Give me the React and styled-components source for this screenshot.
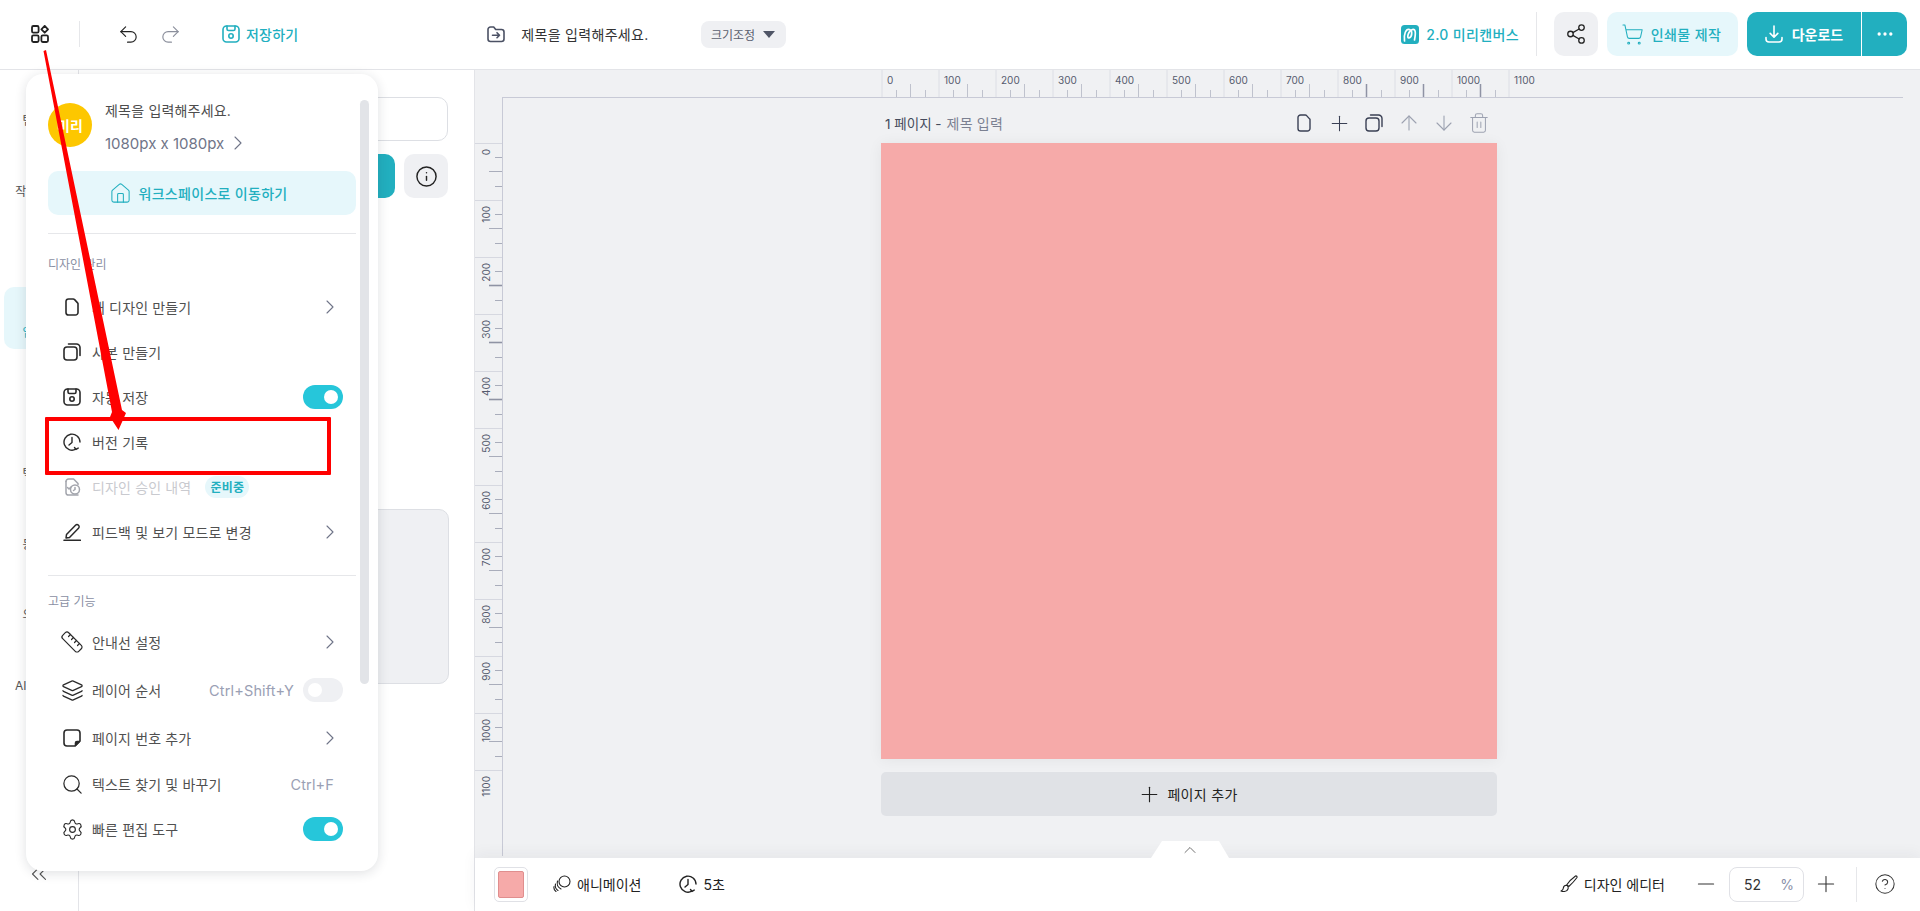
import React from "react";
import styled, { createGlobalStyle } from "styled-components";
import {
  Undo2, Redo2, Share2, Info, Trash2, CircleHelp, House, Ruler, Layers, Search, Settings,
  ChevronRight, ChevronsLeft, ChevronUp, Plus, Minus, ArrowUp, ArrowDown, ShoppingCart, Ellipsis,
} from "lucide-react";

const TEAL = "#22afbf";
const TINT = "#e6f7fb";
const GREY = "#eff0f3";
const FONT = `Inter, "Noto Sans CJK KR", sans-serif`;

const Global = createGlobalStyle`
  html, body { margin: 0; padding: 0; background: #fff; }
  * { box-sizing: border-box; }
  body { font-family: ${FONT}; color: #333; }
`;

const Page = styled.div`
  position: relative; width: 1920px; height: 911px; overflow: hidden;
  display: grid; grid-template-rows: 70px 1fr; background: #fff;
`;

/* a fixed box in which an icon that has inner padding may overflow, centred */
const IconBox = styled.span`
  width: ${p => p.$w || 18}px; height: 18px; display: flex; align-items: center; justify-content: center; flex: none;
  color: ${p => p.$color || "inherit"};
  & > svg { flex: none; }
`;

/* ---------- header ---------- */
const Header = styled.header`
  display: flex; align-items: center; height: 70px; border-bottom: 1px solid #e3e4e8;
  padding: 0 13px 1px 31px;
`;
const VLine = styled.span`
  width: 1px; height: ${p => p.$h}px; background: #e6e7ea; flex: none;
`;
const Group = styled.div`
  display: flex; align-items: center; gap: ${p => p.$gap || 0}px; flex: none;
  margin-left: ${p => p.$ml || 0}px; margin-right: ${p => p.$mr || 0}px;
  color: ${p => p.$color || "inherit"};
`;
const SaveText = styled.span`
  font-size: 14px; font-weight: 500; color: ${TEAL}; letter-spacing: .2px;
`;
const DocTitle = styled.span`
  font-size: 14px; color: #333; letter-spacing: .3px;
`;
const ResizePill = styled.div`
  display: flex; align-items: center; justify-content: center; gap: 8px;
  width: 85px; height: 27px; background: ${GREY}; border-radius: 8px;
  font-size: 12px; color: #5a5f70; margin-left: 52px;
`;
const Caret = styled.span`
  width: 0; height: 0; border-left: 6px solid transparent; border-right: 6px solid transparent;
  border-top: 7px solid #4f5566;
`;
const Spacer = styled.div`flex: 1;`;
const MiriText = styled.span`
  font-size: 14px; font-weight: 500; color: ${TEAL}; letter-spacing: .35px;
`;
const SquareBtn = styled.div`
  width: 44px; height: 44px; border-radius: 10px; background: ${GREY}; color: #222;
  display: flex; align-items: center; justify-content: center; flex: none;
`;
const PrintBtn = styled.div`
  display: flex; align-items: center; justify-content: center; gap: 9px; width: 131px; height: 44px;
  margin-left: 9px; border-radius: 10px; background: ${TINT}; color: ${TEAL};
  font-size: 14px; font-weight: 500; letter-spacing: .4px;
`;
const DownloadBtn = styled.div`
  display: flex; align-items: stretch; width: 160px; height: 44px; margin-left: 9px;
  border-radius: 10px; background: ${TEAL}; color: #fff; overflow: hidden;
`;
const DownloadMain = styled.div`
  flex: 1; display: flex; align-items: center; justify-content: center; gap: 9px;
  font-size: 14px; font-weight: 700; border-right: 1px solid #fff;
`;
const DownloadMore = styled.div`
  width: 45px; display: flex; align-items: center; justify-content: center;
`;

/* ---------- body ---------- */
const Body = styled.div`
  display: grid; grid-template-columns: 79px 396px 1fr; min-height: 0;
`;
const Sidebar = styled.nav`
  display: flex; flex-direction: column; align-items: center; padding: 5px 0 24px; gap: 8.6px;
  border-right: 1px solid #e3e4e8; height: 841px;
`;
const NavItem = styled.div`
  width: 70px; height: 62px; flex: none; border-radius: 10px; display: flex; align-items: flex-end; justify-content: center;
  padding-bottom: 9px; font-size: 12px; white-space: nowrap;
  background: ${p => p.$active ? TINT : "transparent"}; color: ${p => p.$active ? TEAL : "#555"};
`;
const Collapse = styled.div`
  margin-top: auto; color: #555; display: flex;
`;
const Panel = styled.section`
  border-right: 1px solid #e3e4e8; padding: 27px 26px 0 27px;
  display: flex; flex-direction: column;
`;
const PanelInput = styled.div`
  height: 44px; width: 342px; border: 1px solid #dddfe4; border-radius: 10px;
`;
const PanelActions = styled.div`
  display: flex; gap: 9px; margin-top: 13px;
`;
const PanelGo = styled.div`
  flex: 1; height: 44px; background: ${TEAL}; border-radius: 10px;
`;
const PanelBox = styled.div`
  margin-top: 311px; height: 175px; width: 343px; background: ${GREY}; border: 1px solid #dddfe4; border-radius: 10px;
`;

/* ---------- editor ---------- */
const Editor = styled.main`
  display: flex; flex-direction: column; min-width: 0; background: #f0f1f3; height: 841px;
`;
const HRulerSvg = styled.svg`
  display: block; flex: none; width: 100%; height: 28px;
`;
const Work = styled.div`
  flex: 1; display: flex; min-height: 0;
`;
const VRulerSvg = styled.svg`
  display: block; flex: none; width: 28px; height: 760px;
`;
const Stage = styled.div`
  flex: 1; display: flex; justify-content: center; padding: 15px 45px 0 0;
`;
const PageColumn = styled.div`
  width: 616px; display: flex; flex-direction: column;
`;
const PageHead = styled.div`
  height: 20px; display: flex; align-items: center; padding: 0 9px 0 4px; margin-bottom: 10px;
`;
const PageNo = styled.span`
  font-size: 13.500px; color: #444b5c; white-space: pre;
`;
const PageName = styled.span`
  font-size: 14px; color: #7b8091; margin-left: 5px; letter-spacing: .2px;
`;
const PageTools = styled.div`
  margin-left: auto; display: flex; gap: 17px;
`;
const Artboard = styled.div`
  width: 616px; height: 616px; background: #f6aaa9; box-shadow: 0 1px 14px rgba(0,0,0,.06);
`;
const AddPage = styled.div`
  margin-top: 13px; height: 44px; border-radius: 5px; background: #e0e2e6;
  display: flex; align-items: center; justify-content: center; gap: 9px; font-size: 14px; color: #222; letter-spacing: .3px;
`;
const BottomBar = styled.footer`
  position: relative; flex: none; height: 53px; background: #fff; display: flex; align-items: center;
  padding: 0 26px 1px 18px; box-shadow: 0 -4px 14px rgba(40,45,60,.05);
`;
const ExpandTab = styled.div`
  position: absolute; left: 676px; top: -17px; width: 78px; height: 17px; background: #fff;
  clip-path: polygon(0 100%, 11px 0, 68px 0, 100% 100%);
  display: flex; align-items: center; justify-content: center; color: #555;
`;
const Swatch = styled.div`
  width: 34px; height: 35px; border: 1px solid #e0e1e6; border-radius: 5px; padding: 3px;
  display: flex; margin-left: 1px;
`;
const SwatchFill = styled.div`
  flex: 1; background: #f6aaa9; border: 1px solid #e08e8e; border-radius: 2px;
`;
const BarItem = styled.div`
  display: flex; align-items: center; gap: 6px; font-size: 14px; color: #222; margin-left: ${p => p.$ml}px; flex: none;
`;
const ZoomInput = styled.div`
  width: 75px; height: 35px; margin: 0 13px 0 14px; border: 1px solid #e0e1e6; border-radius: 8px;
  display: flex; align-items: center; justify-content: space-between; padding: 0 9px 0 14px; font-size: 14px; color: #333;
`;
const Percent = styled.span`color: #8a90a8;`;

/* ---------- menu ---------- */
const Menu = styled.aside`
  position: absolute; left: 26px; top: 74px; width: 352px; height: 797px; background: #fff;
  border-radius: 17px; box-shadow: 0 2px 12px rgba(30,35,50,.14); padding: 29px 22px 0;
`;
const ScrollThumb = styled.div`
  position: absolute; left: 334px; top: 26px; width: 9px; height: 584px; background: #e2e4e8; border-radius: 5px;
`;
const MenuHead = styled.div`
  display: flex; gap: 13px; height: 44px;
`;
const Avatar = styled.div`
  width: 44px; height: 44px; border-radius: 50%; background: #fdc700; color: #fff;
  display: flex; align-items: center; justify-content: center; font-size: 14px; font-weight: 600; flex: none;
`;
const HeadText = styled.div`
  display: flex; flex-direction: column; justify-content: space-between; margin-top: -3px; height: 55px;
`;
const HeadTitle = styled.div`font-size: 14px; color: #4d4d4d; letter-spacing: .2px;`;
const HeadSize = styled.div`
  display: flex; align-items: center; gap: 2px; font-size: 15px; color: #6f7488;
`;
const WorkspaceBtn = styled.div`
  margin-top: 24px; height: 44px; border-radius: 10px; background: ${TINT}; color: ${TEAL};
  display: flex; align-items: center; justify-content: center; gap: 9px; font-size: 14px; font-weight: 500; padding-right: 5px; letter-spacing: .3px;
`;
const Divider = styled.div`
  height: 1px; background: #e6e7ea; margin-top: ${p => p.$mt}px;
`;
const SectionLabel = styled.div`
  height: 18px; line-height: 18px; font-size: 12px; color: #8a8fa3; margin-top: ${p => p.$mt}px; margin-bottom: ${p => p.$mb}px;
`;
const Row = styled.div`
  display: flex; align-items: center; height: ${p => p.$h || 45}px; padding: 0 22px 0 15px; font-size: 14px; letter-spacing: .15px;
  color: ${p => p.$off ? "#c9cacf" : "#505050"};
`;
const RowIcon = styled(IconBox)`
  margin-right: 11px; color: ${p => p.$off ? "#a3a5ad" : "#2a2a2a"};
`;
const RowEnd = styled.span`
  margin-left: auto; display: flex; align-items: center; gap: 9px; color: #6f7488;
`;
const Shortcut = styled.span`color: #9aa0b4; font-size: 14.500px;`;
const Toggle = styled.span`
  display: flex; align-items: center; justify-content: ${p => p.$on ? "flex-end" : "flex-start"};
  width: 40px; height: 24px; border-radius: 12px; padding: 0 5px; margin-right: -9px;
  background: ${p => p.$on ? "#26c6da" : GREY};
`;
const Knob = styled.span`
  width: 14px; height: 14px; border-radius: 50%; background: #fff;
`;
const Badge = styled.span`
  margin-left: 14px; height: 22px; width: 44px; border-radius: 11px; background: ${TINT}; color: ${TEAL};
  font-size: 12px; font-weight: 600; display: flex; align-items: center; justify-content: center;
`;
const RowChevron = styled.span`
  display: flex; margin-right: -8px;
`;

/* ---------- annotation ---------- */
const Highlight = styled.div`
  position: absolute; left: 45px; top: 417px; width: 286px; height: 58px; border: 4px solid #f00; border-radius: 1px;
`;
const ArrowLayer = styled.svg`
  position: absolute; left: 0; top: 0; width: 1920px; height: 911px; pointer-events: none;
`;

/* ---------- drawings ---------- */
const Svg = ({ size = 18, sw = 1.6, children, color }) => (
  <svg width={size} height={size} viewBox="0 0 18 18" fill="none" stroke={color || "currentColor"} strokeWidth={sw}
    strokeLinecap="round" strokeLinejoin="round">{children}</svg>
);
const GridIcon = () => (
  <Svg sw={1.8} color="#222">
    <rect x="1" y="1" width="6.6" height="6.6" rx="1.4" />
    <rect x="1" y="10.4" width="6.6" height="6.6" rx="1.4" />
    <rect x="10.4" y="10.4" width="6.6" height="6.6" rx="1.4" />
    <path d="M13.7.9 17 4.3l-3.3 3.4-3.3-3.4z" />
  </Svg>
);
const SaveIcon = ({ color }) => (
  <Svg color={color} sw={1.6}>
    <rect x="1" y="1" width="16" height="16" rx="3.5" />
    <path d="M5 1v3a1.5 1.5 0 0 0 1.5 1.5h5A1.5 1.5 0 0 0 13 4V1" />
    <circle cx="9" cy="11" r="2.2" />
  </Svg>
);
const FolderIcon = () => (
  <Svg color="#4b5164">
    <path d="M1 4.5A2.5 2.5 0 0 1 3.5 2h3.2l2 2.5h5.8A2.5 2.5 0 0 1 17 7v7a2.5 2.5 0 0 1-2.5 2.5h-11A2.5 2.5 0 0 1 1 14z" />
    <path d="M5.5 10.2h7M10 7.7l2.5 2.5-2.5 2.5" />
  </Svg>
);
const Logo = () => (
  <svg width="18" height="19" viewBox="0 0 18 19">
    <rect width="18" height="19" rx="3.5" fill={TEAL} />
    <path d="M3.500 16C2.500 9 5 3.500 8.500 4.500c3.500 1 2.500 8-.5 8.500-2.500.4-1 -7 3.500 -8.500 3-.8 3.500 3 2 10.500" fill="none" stroke="#fff" strokeWidth="1.700" strokeLinecap="round" />
  </svg>
);
const DownloadIcon = () => (
  <Svg>
    <path d="M9 1v11M5.2 8.4 9 12.200l3.800-3.800M1 12.500v1.500a3 3 0 0 0 3 3h10a3 3 0 0 0 3-3v-1.500" />
  </Svg>
);
const DocIcon = ({ sw = 1.6 }) => (
  <Svg sw={sw}>
    <path d="M3 3.600A2.600 2.600 0 0 1 5.600 1h4.600c.5 0 1 .2 1.400.6l3.200 3.500c.3.3.2.7.2 1.200v8.100a2.600 2.600 0 0 1-2.600 2.600H5.600A2.600 2.600 0 0 1 3 14.400z" />
  </Svg>
);
const CopyIcon = ({ sw = 1.6 }) => (
  <Svg sw={sw}>
    <rect x="1" y="4" width="13" height="13" rx="3" />
    <path d="M5.500 1h8A3.500 3.500 0 0 1 17 4.500V12.500" />
  </Svg>
);
const ClockArrow = () => (
  <Svg sw={1.4}>
    <path d="M12.800 16.200A8 8 0 1 1 17 9" />
    <path d="M9 4.500v5l-3 2.500" />
    <path d="M11.500 14.500l1.500 1.900 2.200-1.300" />
  </Svg>
);
const ApprovalIcon = () => (
  <Svg sw={1.5}>
    <path d="M3 3.600A2.600 2.600 0 0 1 5.600 1h5l4.400 4.500v1" />
    <path d="M3 3.600v10.800A2.600 2.600 0 0 0 5.600 17h9.400" />
    <circle cx="12" cy="11.500" r="4.500" />
    <path d="M4.500 9.500l1.500 1.500 2-2" />
    <path d="M12 9.500v2l-1.500 1" />
  </Svg>
);
const PenIcon = () => (
  <Svg sw={1.5}>
    <path d="M3.500 11.500 12.500 2.300a2.100 2.100 0 0 1 3 3L6.500 14.500 3 15z" />
    <path d="M1 17.300h16.500" />
  </Svg>
);
const StickyIcon = () => (
  <Svg sw={1.6}>
    <path d="M4 1h10a3 3 0 0 1 3 3v8l-5 5H4a3 3 0 0 1-3-3V4a3 3 0 0 1 3-3z" />
    <path d="M12.500 16.500v-2.500a1.500 1.500 0 0 1 1.500-1.500h2.500z" fill="currentColor" />
  </Svg>
);
const AnimationIcon = () => (
  <Svg sw={1.1}>
    <circle cx="11.500" cy="6.500" r="5.500" />
    <path d="M4.500 6a7 7 0 0 0 3.500 8M2.500 9a6 6 0 0 0 2.500 6.500" />
    <path d="M1 11.500a5 5 0 0 0 2 5" />
  </Svg>
);
const BrushIcon = () => (
  <Svg sw={1.1}>
    <path d="M15.500 1 C12 3.500 9 6.500 6.800 9.800l2 1.700C11.500 9 14.500 6 17 2.500c.4-.9-.6-1.900-1.500-1.500z" />
    <path d="M6.300 10.200c-1.900.1-2.900 1.400-3 3.100-.1 1.300-1 2.200-2.300 2.700 2.700 1 6 .5 7-2 .6-1.600-.1-3.500-1.700-3.800z" />
  </Svg>
);

/* ---------- rulers ---------- */
const LABELS = [0, 100, 200, 300, 400, 500, 600, 700, 800, 900, 1000, 1100];
const STEP = 57;
const HOT_H = [800, 900, 1000];
const HOT_V = [200, 300, 400];

const HRuler = () => {
  const ox = 882 - 475;
  return (
    <HRulerSvg viewBox="0 0 1445 28">
      <line x1="27" y1="27.500" x2="1428" y2="27.500" stroke="#c8cad6" />
      {LABELS.map((n, i) => {
        const x = ox + i * STEP;
        const hot = HOT_H.includes(n);
        return (
          <g key={n}>
            <line x1={x} y1="0" x2={x} y2="27" stroke="#dcdee5" />
            <text x={x + 5} y="14" fontSize="10" fill="#555b6e" fontFamily="Inter, sans-serif">{n}</text>
            {n < 1100 && (
              <>
                <line x1={x + 14.500} y1="20" x2={x + 14.500} y2="27" stroke="#bfc2cd" />
                <line x1={x + 28.500} y1="14" x2={x + 28.500} y2="27" stroke={hot ? "#8f93a4" : "#bfc2cd"} strokeWidth={hot ? 1.500 : 1} />
                <line x1={x + 43.500} y1="20" x2={x + 43.500} y2="27" stroke="#bfc2cd" />
              </>
            )}
          </g>
        );
      })}
    </HRulerSvg>
  );
};

const VRuler = () => {
  const oy = 143 - 98;
  return (
    <VRulerSvg viewBox="0 0 28 760">
      <line x1="27.500" y1="0" x2="27.500" y2="758" stroke="#c8cad6" />
      {LABELS.map((n, i) => {
        const y = oy + i * STEP;
        const hot = HOT_V.includes(n);
        return (
          <g key={n}>
            <line x1="0" y1={y + .5} x2="27" y2={y + .5} stroke="#d6d8e0" />
            <text transform={`translate(14.500 ${y + 6}) rotate(-90)`} textAnchor="end" fontSize="10" fill="#555b6e" fontFamily="Inter, sans-serif">{n}</text>
            {n < 1100 && (
              <>
                <line x1="20" y1={y + 14.500} x2="27" y2={y + 14.500} stroke="#a9adbb" />
                <line x1="14" y1={y + 28.500} x2="27" y2={y + 28.500} stroke={hot ? "#8f93a4" : "#a9adbb"} strokeWidth={hot ? 1.600 : 1} />
                <line x1="20" y1={y + 43.500} x2="27" y2={y + 43.500} stroke="#a9adbb" />
              </>
            )}
          </g>
        );
      })}
    </VRulerSvg>
  );
};

const More = () => <RowChevron><ChevronRight size={24} strokeWidth={1.100} /></RowChevron>;
const NAV = ["템플릿", "작업 공간", "요소", "업로드", "사진", "텍스트", "동영상", "오디오", "AI 드로잉"];

export default function App() {
  return (
    <Page>
      <Global />
      <Header>
        <Group $mr={30}><GridIcon /></Group>
        <VLine $h={26} />
        <Group $ml={39} $gap={24} $color="#222">
          <IconBox><Undo2 size={23} strokeWidth={1.200} /></IconBox>
          <IconBox $color="#8b8f9c"><Redo2 size={23} strokeWidth={1.200} /></IconBox>
        </Group>
        <Group $ml={43} $gap={6}>
          <SaveIcon color={TEAL} />
          <SaveText>저장하기</SaveText>
        </Group>
        <Group $ml={189} $gap={16}>
          <FolderIcon />
          <DocTitle>제목을 입력해주세요.</DocTitle>
        </Group>
        <ResizePill>크기조정<Caret /></ResizePill>
        <Spacer />
        <Group $gap={7} $mr={17}>
          <Logo />
          <MiriText>2.0 미리캔버스</MiriText>
        </Group>
        <VLine $h={44} />
        <Group $ml={17}>
          <SquareBtn><Share2 size={22} strokeWidth={1.400} /></SquareBtn>
        </Group>
        <PrintBtn><IconBox><ShoppingCart size={23} strokeWidth={1.100} /></IconBox>인쇄물 제작</PrintBtn>
        <DownloadBtn>
          <DownloadMain><DownloadIcon />다운로드</DownloadMain>
          <DownloadMore><Ellipsis size={20} /></DownloadMore>
        </DownloadBtn>
      </Header>

      <Body>
        <Sidebar>
          {NAV.map((t, i) => <NavItem key={t} $active={i === 3}>{t}</NavItem>)}
          <Collapse><ChevronsLeft size={26} strokeWidth={1} /></Collapse>
        </Sidebar>

        <Panel>
          <PanelInput />
          <PanelActions>
            <PanelGo />
            <SquareBtn><Info size={23} strokeWidth={1.500} /></SquareBtn>
          </PanelActions>
          <PanelBox />
        </Panel>

        <Editor>
          <HRuler />
          <Work>
            <VRuler />
            <Stage>
              <PageColumn>
                <PageHead>
                  <PageNo>1 페이지 -</PageNo>
                  <PageName>제목 입력</PageName>
                  <PageTools>
                    <IconBox $color="#3a4054"><DocIcon sw={1.400} /></IconBox>
                    <IconBox $color="#3a4054"><Plus size={25} strokeWidth={1} /></IconBox>
                    <IconBox $color="#3a4054"><CopyIcon sw={1.400} /></IconBox>
                    <IconBox $color="#9da2b1"><ArrowUp size={24} strokeWidth={1.100} /></IconBox>
                    <IconBox $color="#9da2b1"><ArrowDown size={24} strokeWidth={1.100} /></IconBox>
                    <IconBox $color="#9da2b1"><Trash2 size={22} strokeWidth={1.100} /></IconBox>
                  </PageTools>
                </PageHead>
                <Artboard />
                <AddPage><IconBox><Plus size={25} strokeWidth={1.100} /></IconBox>페이지 추가</AddPage>
              </PageColumn>
            </Stage>
          </Work>
          <BottomBar>
            <ExpandTab><ChevronUp size={20} strokeWidth={1} /></ExpandTab>
            <Swatch><SwatchFill /></Swatch>
            <BarItem $ml={25}><AnimationIcon />애니메이션</BarItem>
            <BarItem $ml={38}><ClockArrow />5초</BarItem>
            <Spacer />
            <BarItem $ml={0}><BrushIcon />디자인 에디터</BarItem>
            <Group $ml={32} $color="#333"><IconBox><Minus size={26} strokeWidth={1} /></IconBox></Group>
            <ZoomInput>52<Percent>%</Percent></ZoomInput>
            <Group $color="#333"><IconBox><Plus size={26} strokeWidth={1} /></IconBox></Group>
            <Group $ml={21} $mr={19}><VLine $h={35} /></Group>
            <Group $color="#333"><IconBox><CircleHelp size={22} strokeWidth={1.100} /></IconBox></Group>
          </BottomBar>
        </Editor>
      </Body>

      <Menu>
        <ScrollThumb />
        <MenuHead>
          <Avatar>미리</Avatar>
          <HeadText>
            <HeadTitle>제목을 입력해주세요.</HeadTitle>
            <HeadSize>1080px x 1080px <More /></HeadSize>
          </HeadText>
        </MenuHead>
        <WorkspaceBtn><IconBox><House size={23} strokeWidth={1.100} /></IconBox>워크스페이스로 이동하기</WorkspaceBtn>
        <Divider $mt={18} />
        <SectionLabel $mt={22} $mb={10}>디자인 관리</SectionLabel>
        <Row><RowIcon><DocIcon /></RowIcon>새 디자인 만들기<RowEnd><More /></RowEnd></Row>
        <Row><RowIcon><CopyIcon /></RowIcon>사본 만들기</Row>
        <Row><RowIcon><SaveIcon /></RowIcon>자동 저장<RowEnd><Toggle $on><Knob /></Toggle></RowEnd></Row>
        <Row><RowIcon><ClockArrow /></RowIcon>버전 기록</Row>
        <Row $off><RowIcon $off><ApprovalIcon /></RowIcon>디자인 승인 내역<Badge>준비중</Badge></Row>
        <Row><RowIcon><PenIcon /></RowIcon>피드백 및 보기 모드로 변경<RowEnd><More /></RowEnd></Row>
        <Divider $mt={21} />
        <SectionLabel $mt={17} $mb={7}>고급 기능</SectionLabel>
        <Row $h={48}><RowIcon><Ruler size={24} strokeWidth={1.200} /></RowIcon>안내선 설정<RowEnd><More /></RowEnd></Row>
        <Row $h={48}><RowIcon><Layers size={23} strokeWidth={1.300} /></RowIcon>레이어 순서<RowEnd><Shortcut>Ctrl+Shift+Y</Shortcut><Toggle><Knob /></Toggle></RowEnd></Row>
        <Row $h={47}><RowIcon><StickyIcon /></RowIcon>페이지 번호 추가<RowEnd><More /></RowEnd></Row>
        <Row $h={46}><RowIcon><Search size={23} strokeWidth={1.300} /></RowIcon>텍스트 찾기 및 바꾸기<RowEnd><Shortcut>Ctrl+F</Shortcut></RowEnd></Row>
        <Row $h={44}><RowIcon><Settings size={23} strokeWidth={1.200} /></RowIcon>빠른 편집 도구<RowEnd><Toggle $on><Knob /></Toggle></RowEnd></Row>
      </Menu>

      <Highlight />
      <ArrowLayer viewBox="0 0 1920 911">
        <polygon points="43.500,51 46,50 122,410 126,413 118.500,430 110,417 112,412" fill="#f00" />
      </ArrowLayer>
    </Page>
  );
}
